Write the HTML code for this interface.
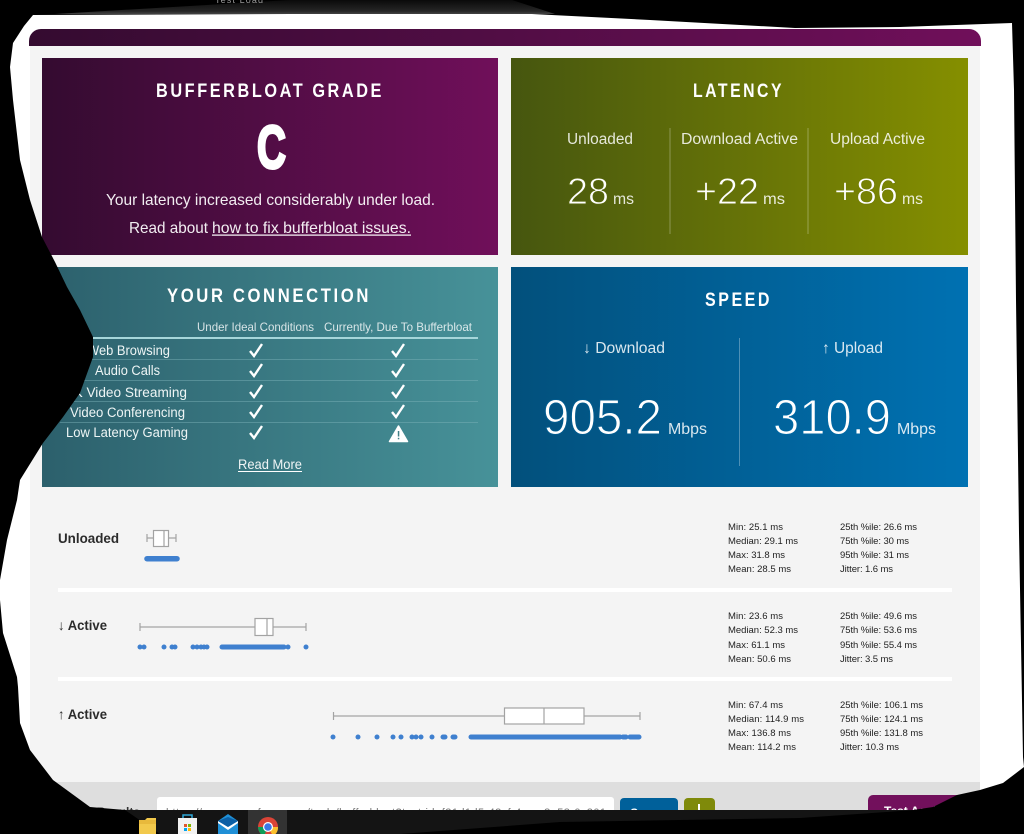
<!DOCTYPE html>
<html><head><meta charset="utf-8"><title>Bufferbloat Grade</title>
<style>
html,body{margin:0;padding:0;background:#000;width:1024px;height:834px;overflow:hidden}
svg{display:block}
text{font-family:"Liberation Sans",sans-serif;fill:#fff}
.s text{fill:#222;font-size:9.5px}
.l{fill:#eef5f5;font-size:13.5px}
.h{font-size:19px;font-weight:700;letter-spacing:3px}
</style></head><body>
<svg width="1024" height="834" viewBox="0 0 1024 834" xmlns="http://www.w3.org/2000/svg">
<defs>
<linearGradient id="a"><stop offset="0" stop-color="#340b30"/><stop offset="1" stop-color="#700f5a"/></linearGradient>
<linearGradient id="b"><stop offset="0" stop-color="#46560f"/><stop offset="1" stop-color="#858f00"/></linearGradient>
<linearGradient id="c"><stop offset="0" stop-color="#2c606c"/><stop offset="1" stop-color="#479299"/></linearGradient>
<linearGradient id="d"><stop offset="0" stop-color="#02507c"/><stop offset="1" stop-color="#0071b2"/></linearGradient>
<linearGradient id="t" x1="0" y1="0" x2="0" y2="1"><stop offset="0" stop-color="#0a0a0a"/><stop offset=".8" stop-color="#262626"/><stop offset="1" stop-color="#444"/></linearGradient>
</defs>
<rect width="1024" height="834" fill="#fff"/>
<rect x="30" y="40" width="950" height="760" fill="#f4f4f4"/>
<rect x="30" y="782" width="950" height="40" fill="#dedede"/>
<path d="M29 46V41a12 12 0 0 1 12-12H969a12 12 0 0 1 12 12V46Z" fill="url(#a)"/>

<rect x="42" y="58" width="456" height="197" fill="url(#a)"/>
<rect x="511" y="58" width="457" height="197" fill="url(#b)"/>
<rect x="42" y="267" width="456" height="220" fill="url(#c)"/>
<rect x="511" y="267" width="457" height="220" fill="url(#d)"/>

<!-- Grade -->
<text class="h" x="156" y="97" textLength="228" lengthAdjust="spacingAndGlyphs">BUFFERBLOAT GRADE</text>
<text x="257" y="168" font-size="60" font-weight="700" stroke="#fff" stroke-width="3" textLength="29" lengthAdjust="spacingAndGlyphs">C</text>
<text x="106" y="205" font-size="16" fill-opacity=".93" textLength="329" lengthAdjust="spacingAndGlyphs">Your latency increased considerably under load.</text>
<text x="129" y="233" font-size="16" fill-opacity=".93" textLength="79" lengthAdjust="spacingAndGlyphs">Read about</text>
<text x="212" y="233" font-size="16" fill-opacity=".93" textLength="199" lengthAdjust="spacingAndGlyphs">how to fix bufferbloat issues.</text>
<rect x="212" y="234.5" width="199" height="1.2" fill="#fff"/>

<!-- Latency -->
<text class="h" x="693" y="97" textLength="91" lengthAdjust="spacingAndGlyphs">LATENCY</text>
<text x="567" y="144" font-size="15.5" fill-opacity=".85" textLength="66" lengthAdjust="spacingAndGlyphs">Unloaded</text>
<text x="681" y="144" font-size="15.5" fill-opacity=".85" textLength="117" lengthAdjust="spacingAndGlyphs">Download Active</text>
<text x="830" y="144" font-size="15.5" fill-opacity=".85" textLength="95" lengthAdjust="spacingAndGlyphs">Upload Active</text>
<rect x="669.5" y="128" width="1" height="106" fill="#fff" fill-opacity=".3"/>
<rect x="807.5" y="128" width="1" height="106" fill="#fff" fill-opacity=".3"/>
<g font-size="37" stroke-width=".9">
<text x="567" y="204" stroke="#56650d" textLength="42" lengthAdjust="spacingAndGlyphs">28</text>
<text x="695" y="204" stroke="#66720a" textLength="64" lengthAdjust="spacingAndGlyphs">+22</text>
<text x="834" y="204" stroke="#747f05" textLength="64" lengthAdjust="spacingAndGlyphs">+86</text>
</g>
<text x="613" y="204" font-size="16" fill-opacity=".85" textLength="21" lengthAdjust="spacingAndGlyphs">ms</text>
<text x="763" y="204" font-size="16" fill-opacity=".85" textLength="22" lengthAdjust="spacingAndGlyphs">ms</text>
<text x="902" y="204" font-size="16" fill-opacity=".85" textLength="21" lengthAdjust="spacingAndGlyphs">ms</text>

<!-- Connection -->
<text class="h" x="167" y="302" textLength="204" lengthAdjust="spacingAndGlyphs">YOUR CONNECTION</text>
<text x="197" y="331" font-size="12" fill-opacity=".8" textLength="117" lengthAdjust="spacingAndGlyphs">Under Ideal Conditions</text>
<text x="324" y="331" font-size="12" fill-opacity=".8" textLength="148" lengthAdjust="spacingAndGlyphs">Currently, Due To Bufferbloat</text>
<rect x="60" y="337" width="418" height="2" fill="#a6d6da"/>
<g fill="#7fb4ba" fill-opacity=".45">
<rect x="60" y="359" width="418" height="1"/><rect x="60" y="380" width="418" height="1"/><rect x="60" y="401" width="418" height="1"/><rect x="60" y="422" width="418" height="1"/>
</g>
<text class="l" x="87" y="355" textLength="83" lengthAdjust="spacingAndGlyphs">Web Browsing</text>
<text class="l" x="95" y="375" textLength="65" lengthAdjust="spacingAndGlyphs">Audio Calls</text>
<text class="l" x="66" y="397" textLength="121" lengthAdjust="spacingAndGlyphs">4K Video Streaming</text>
<text class="l" x="70" y="417" textLength="115" lengthAdjust="spacingAndGlyphs">Video Conferencing</text>
<text class="l" x="66" y="437" textLength="122" lengthAdjust="spacingAndGlyphs">Low Latency Gaming</text>
<g fill="none" stroke="#fff" stroke-width="2.4">
<path d="M250 351l4 5 8-12M392 351l4 5 8-12"/>
<path d="M250 371l4 5 8-12M392 371l4 5 8-12"/>
<path d="M250 392l4 5 8-12M392 392l4 5 8-12"/>
<path d="M250 412l4 5 8-12M392 412l4 5 8-12"/>
<path d="M250 433l4 5 8-12"/>
</g>
<path d="M398.5 426L407.500 441.500H389.500Z" fill="#fff" stroke="#fff" stroke-width="1.500" stroke-linejoin="round"/>
<rect x="397.800" y="431" width="1.500" height="5.500" fill="#3f7f87"/><rect x="397.800" y="437.800" width="1.500" height="1.500" fill="#3f7f87"/>
<text x="238" y="469" font-size="14" fill-opacity=".92" textLength="64" lengthAdjust="spacingAndGlyphs">Read More</text>
<rect x="238" y="471" width="64" height="1" fill="#fff"/>

<!-- Speed -->
<text class="h" x="705" y="306" textLength="67" lengthAdjust="spacingAndGlyphs">SPEED</text>
<text x="583" y="353" font-size="15.500" fill-opacity=".85" textLength="82" lengthAdjust="spacingAndGlyphs">↓ Download</text>
<text x="822" y="353" font-size="15.500" fill-opacity=".85" textLength="61" lengthAdjust="spacingAndGlyphs">↑ Upload</text>
<rect x="739" y="338" width="1" height="128" fill="#fff" fill-opacity=".3"/>
<g font-size="49" stroke-width="1.100">
<text x="543" y="434" stroke="#025b8e" textLength="119" lengthAdjust="spacingAndGlyphs">905.2</text>
<text x="773" y="434" stroke="#0168a3" textLength="118" lengthAdjust="spacingAndGlyphs">310.9</text>
</g>
<text x="668" y="434" font-size="16" fill-opacity=".85" textLength="39" lengthAdjust="spacingAndGlyphs">Mbps</text>
<text x="897" y="434" font-size="16" fill-opacity=".85" textLength="39" lengthAdjust="spacingAndGlyphs">Mbps</text>

<!-- Rows -->
<g font-size="14" font-weight="700">
<text x="58" y="543" style="fill:#2b2b2b" textLength="61" lengthAdjust="spacingAndGlyphs">Unloaded</text>
<text x="58" y="630" style="fill:#2b2b2b" textLength="49" lengthAdjust="spacingAndGlyphs">↓ Active</text>
<text x="58" y="719" style="fill:#2b2b2b" textLength="49" lengthAdjust="spacingAndGlyphs">↑ Active</text>
</g>
<rect x="58" y="588" width="894" height="4" fill="#fff"/>
<rect x="58" y="677" width="894" height="4" fill="#fff"/>

<g fill="#fff" stroke="#a3a3a3" stroke-width="1.200">
<path d="M147 534v8M147 538H153M168 538H176M176 534v8" fill="none"/>
<rect x="153.500" y="530.500" width="15" height="16"/><path d="M164 530.500v16"/>
<path d="M140 623v8M140 627H255M273 627H306M306 623v8" fill="none"/>
<rect x="255" y="618.500" width="18" height="17"/><path d="M267 618.500v17"/>
<path d="M333.500 712v8M333 716H504M584 716H640M640 712v8" fill="none"/>
<rect x="504.500" y="708" width="79.500" height="16"/><path d="M544 708v16"/>
</g>

<g fill="#3f80cf" stroke="#3f80cf" stroke-linecap="round">
<path d="M147 558.700H177" stroke-width="5.500"/>
<path d="M222 647H284" stroke-width="5"/>
<path d="M471 737H620" stroke-width="5"/>
<path d="M630 737H639M623 737H626M453 737H455M443 737H445" stroke-width="5"/>
<g stroke="none">
<circle cx="140" cy="647" r="2.500"/><circle cx="144" cy="647" r="2.500"/><circle cx="164" cy="647" r="2.500"/><circle cx="172" cy="647" r="2.500"/><circle cx="175" cy="647" r="2.500"/><circle cx="193" cy="647" r="2.500"/><circle cx="197" cy="647" r="2.500"/><circle cx="201" cy="647" r="2.500"/><circle cx="204" cy="647" r="2.500"/><circle cx="207" cy="647" r="2.500"/><circle cx="288" cy="647" r="2.500"/><circle cx="306" cy="647" r="2.500"/>
<circle cx="333" cy="737" r="2.500"/><circle cx="358" cy="737" r="2.500"/><circle cx="377" cy="737" r="2.500"/><circle cx="393" cy="737" r="2.500"/><circle cx="401" cy="737" r="2.500"/><circle cx="412" cy="737" r="2.500"/><circle cx="416" cy="737" r="2.500"/><circle cx="421" cy="737" r="2.500"/><circle cx="432" cy="737" r="2.500"/>
</g></g>

<g class="s">
<text x="728" y="530" textLength="55">Min: 25.1 ms</text><text x="728" y="544" textLength="70">Median: 29.1 ms</text><text x="728" y="558" textLength="57">Max: 31.8 ms</text><text x="728" y="572" textLength="63">Mean: 28.5 ms</text>
<text x="840" y="530" textLength="77">25th %ile: 26.6 ms</text><text x="840" y="544" textLength="69">75th %ile: 30 ms</text><text x="840" y="558" textLength="69">95th %ile: 31 ms</text><text x="840" y="572" textLength="53">Jitter: 1.6 ms</text>
<text x="728" y="619" textLength="55">Min: 23.6 ms</text><text x="728" y="633" textLength="70">Median: 52.3 ms</text><text x="728" y="648" textLength="57">Max: 61.1 ms</text><text x="728" y="662" textLength="63">Mean: 50.6 ms</text>
<text x="840" y="619" textLength="77">25th %ile: 49.6 ms</text><text x="840" y="633" textLength="77">75th %ile: 53.6 ms</text><text x="840" y="648" textLength="77">95th %ile: 55.4 ms</text><text x="840" y="662" textLength="53">Jitter: 3.5 ms</text>
<text x="728" y="708" textLength="55">Min: 67.4 ms</text><text x="728" y="722" textLength="76">Median: 114.9 ms</text><text x="728" y="736" textLength="63">Max: 136.8 ms</text><text x="728" y="750" textLength="68">Mean: 114.2 ms</text>
<text x="840" y="708" textLength="83">25th %ile: 106.1 ms</text><text x="840" y="722" textLength="83">75th %ile: 124.1 ms</text><text x="840" y="736" textLength="83">95th %ile: 131.8 ms</text><text x="840" y="750" textLength="59">Jitter: 10.3 ms</text>
</g>

<!-- Bottom bar -->
<text x="60" y="816" font-size="12" font-weight="700" style="fill:#333" textLength="80" lengthAdjust="spacingAndGlyphs">Share Results</text>
<rect x="157" y="797" width="457" height="30" rx="3" fill="#fff"/>
<text x="166" y="816" font-size="11" style="fill:#777" textLength="440" lengthAdjust="spacing">https://www.waveform.com/tools/bufferbloat?test-id=f21d1d5-42cf-4cec-8a58-0c201</text>
<rect x="620" y="798" width="58" height="30" rx="4" fill="#00609a"/>
<text x="630" y="816" font-size="11" font-weight="700" textLength="30">Copy</text>
<rect x="684" y="798" width="31" height="30" rx="4" fill="#7f8a0a"/>
<rect x="698" y="804" width="2" height="6" fill="#fff"/>
<rect x="868" y="795" width="100" height="30" rx="5" fill="#72105c"/>
<text x="884" y="815" font-size="12" font-weight="700" textLength="60">Test Again</text>

<!-- Mask -->
<path fill="#000" fill-rule="evenodd" d="M0 0H1024V834H0Z
M33 15 L290 14 L512 13 L650 20 L795 28 L900 27 L1012 23 L1014 90 L1016 300 L1019 533 L1022 700 L1023 757 L1024 767 L1003 783 L980 790 L957 795 L933 807 L913 810 L125 810 L90 807 L53 780 L30 750 L20 723 L18 687 L17 677 L3 633 L0 600 L0 580 L7 540 L17 500 L20 480 L43 443 L63 417 L80 393 L93 357 L93 337 L80 310 L67 287 L55 262 L42 237 L30 200 L20 160 L13 100 L10 67 L13 43 L24 26 Z"/>

<!-- Top strip -->
<path d="M55 14 L290 0 H512 L555 14 Z" fill="url(#t)"/>
<text x="215" y="3" font-size="9" style="fill:#999" textLength="48" lengthAdjust="spacing">Test Load</text>

<!-- Taskbar -->
<path d="M125 810 H915 L800 818 L560 822 L400 834 H160 Z" fill="#141414"/>
<rect x="248" y="810" width="39" height="24" fill="#333"/>
<path d="M139 820h6l2-2h9v16h-17z" fill="#f2c94c"/>
<path d="M139 820h17v4h-17z" fill="#e8b93c"/>
<rect x="178" y="818" width="19" height="16" fill="#f2f2f2"/>
<path d="M183 818v-3h9v3" fill="none" stroke="#2fa8d8" stroke-width="1.500"/>
<rect x="184" y="824" width="3" height="3" fill="#e2572b"/><rect x="188" y="824" width="3" height="3" fill="#7fb800"/><rect x="184" y="828" width="3" height="3" fill="#00a4ef"/><rect x="188" y="828" width="3" height="3" fill="#ffb900"/>
<path d="M218 821l10-7 10 7v13h-20z" fill="#1f8fd6"/>
<path d="M218 821l10 6 10-6v2l-10 7-10-7z" fill="#fff"/>
<path d="M228 817l10 4-10 6-10-6z" fill="#0b5fa5"/>
<circle cx="268" cy="827" r="10" fill="#db4437"/>
<path d="M258 827a10 10 0 0 0 6 9l4-9z" fill="#0f9d58"/>
<path d="M268 827l5 9a10 10 0 0 0 5-9z" fill="#fbc02d"/>
<circle cx="268" cy="827" r="5" fill="#fff"/><circle cx="268" cy="827" r="3.800" fill="#3b78e7"/>
</svg>
</body></html>
